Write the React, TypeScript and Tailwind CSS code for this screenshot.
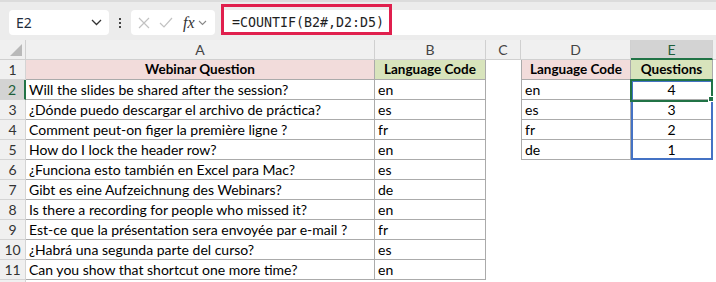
import React from "react";

const rows: [string, string][] = [
  ["Will the slides be shared after the session?", "en"],
  ["¿Dónde puedo descargar el archivo de práctica?", "es"],
  ["Comment peut-on figer la première ligne ?", "fr"],
  ["How do I lock the header row?", "en"],
  ["¿Funciona esto también en Excel para Mac?", "es"],
  ["Gibt es eine Aufzeichnung des Webinars?", "de"],
  ["Is there a recording for people who missed it?", "en"],
  ["Est-ce que la présentation sera envoyée par e-mail ?", "fr"],
  ["¿Habrá una segunda parte del curso?", "es"],
  ["Can you show that shortcut one more time?", "en"],
];

const summary: [string, string][] = [
  ["en", "4"],
  ["es", "3"],
  ["fr", "2"],
  ["de", "1"],
];

function FormulaBar() {
  return (
    <div className="relative h-[40px] bg-[#ececec] border-t-[2px] border-[#dcdcdc] flex items-center pl-[9px]">
      <div className="w-[100px] h-[25px] rounded-[4px] bg-white flex items-center justify-between pl-[7px] pr-[7px] mt-[3px]">
        <span className="font-['Noto_Sans',sans-serif] text-[14px] text-[#1f2d3d] leading-none">E2</span>
        <svg width="11" height="7" viewBox="0 0 11 7" fill="none">
          <path d="M1 1l4.5 4.5L10 1" stroke="#333" strokeWidth="1.3" />
        </svg>
      </div>
      <div className="w-[22px] h-[25px] mt-[3px] flex flex-col items-center justify-center gap-[2px]">
        <div className="w-[2px] h-[2px] bg-[#444]" />
        <div className="w-[2px] h-[2px] bg-[#444]" />
        <div className="w-[2px] h-[2px] bg-[#444]" />
      </div>
      <div className="w-[84px] h-[25px] mt-[3px] rounded-[4px] bg-white flex items-center pl-[7px]">
        <svg width="12" height="12" viewBox="0 0 12 12" fill="none">
          <path d="M1 1l10 10M11 1L1 11" stroke="#c2c2c2" strokeWidth="1.2" />
        </svg>
        <svg width="14" height="11" viewBox="0 0 14 11" fill="none" className="ml-[9px]">
          <path d="M1 6l4 4L13 1" stroke="#c2c2c2" strokeWidth="1.2" />
        </svg>
        <span className="ml-[10px] font-['Liberation_Serif',serif] italic text-[16px] text-[#333] leading-none">
          fx
        </span>
        <svg width="9" height="6" viewBox="0 0 9 6" fill="none" className="ml-[3px]">
          <path d="M1 1l3.5 3.5L8 1" stroke="#888" strokeWidth="1.1" />
        </svg>
      </div>
      <div className="flex-1 h-[25px] mt-[3px] ml-[6px] bg-white rounded-l-[4px] flex items-center pl-[11px]">
        <span className="font-['DejaVu_Sans_Mono',monospace] text-[13.3px] text-[#1f1f1f] leading-none">
          =COUNTIF(B2#,D2:D5)
        </span>
      </div>
      <div className="absolute left-[221px] top-[2px] w-[171px] h-[31px] border-[3px] border-[#e01f4d]" />
    </div>
  );
}

function Grid() {
  const hdr =
    "h-[20px] bg-[#f0f0f0] border-r border-b border-[#d0d0d0] flex items-center justify-center text-[14px] text-[#444]";
  const cell = "h-[20px] flex items-center pl-[3px] text-[14px] text-black whitespace-nowrap overflow-hidden";
  const rowHdr =
    "h-[20px] bg-[#f0f0f0] border-r border-b border-[#d4d4d4] flex items-center justify-center text-[14px] text-[#333]";
  const bold = "text-[13.5px] font-bold text-black";

  return (
    <div className="relative grid grid-cols-[26px_349px_111px_35px_110px_82px_3px] font-['Lato',sans-serif]">
      {/* column headers */}
      <div className="h-[20px] bg-[#f0f0f0] border-r border-b border-[#d0d0d0] relative">
        <svg width="12" height="12" viewBox="0 0 12 12" className="absolute right-[3px] bottom-[3px]">
          <path d="M12 0L12 12L0 12Z" fill="#b9b9b9" />
        </svg>
      </div>
      <div className={hdr}>A</div>
      <div className={hdr}>B</div>
      <div className={hdr}>C</div>
      <div className={hdr}>D</div>
      <div className="h-[20px] bg-[#d3d3d3] border-r border-[#d0d0d0] border-b-[2px] border-b-[#217346] flex items-center justify-center text-[14px] text-[#1d5e3a]">
        E
      </div>
      <div className="h-[20px] bg-[#f0f0f0] border-b border-[#d0d0d0]" />

      {/* row 1 */}
      <div className={rowHdr}>1</div>
      <div className={`h-[20px] bg-[#f2dcdb] border-r border-b border-[#ababab] flex items-center justify-center ${bold}`}>
        Webinar Question
      </div>
      <div className={`h-[20px] bg-[#d8e4bc] border-r border-b border-[#ababab] flex items-center justify-center ${bold}`}>
        Language Code
      </div>
      <div className="h-[20px]" />
      <div className={`h-[20px] bg-[#f2dcdb] border-l border-r border-b border-[#ababab] flex items-center justify-center ${bold}`}>
        Language Code
      </div>
      <div className={`h-[20px] bg-[#d8e4bc] border-r border-b border-[#ababab] flex items-center justify-center ${bold}`}>
        Questions
      </div>
      <div className="h-[20px]" />

      {rows.map(([q, code], i) => {
        const r = i + 2;
        const s = summary[i];
        return (
          <React.Fragment key={r}>
            {r === 2 ? (
              <div className="h-[20px] bg-[#d3d3d3] border-b border-[#d4d4d4] border-r-[2px] border-r-[#217346] flex items-center justify-center text-[14px] text-[#1d5e3a]">
                2
              </div>
            ) : (
              <div className={rowHdr}>{r}</div>
            )}
            <div className={`${cell} border-r border-b border-[#ababab]`}>{q}</div>
            <div className={`${cell} border-r border-b border-[#ababab]`}>{code}</div>
            <div className="h-[20px]" />
            {s ? (
              <>
                <div className={`${cell} border-l border-r border-b border-[#ababab]`}>{s[0]}</div>
                <div className="h-[20px] border-r border-b border-[#ababab] flex items-center justify-center text-[14px] text-black">
                  {s[1]}
                </div>
              </>
            ) : (
              <>
                <div className="h-[20px]" />
                <div className="h-[20px]" />
              </>
            )}
            <div className="h-[20px]" />
          </React.Fragment>
        );
      })}
      {/* row 12 partial */}
      <div className="h-[20px] bg-[#f0f0f0] border-r border-[#d4d4d4]" />
      <div className="h-[20px]" />
      <div className="h-[20px]" />
      <div className="h-[20px]" />
      <div className="h-[20px]" />
      <div className="h-[20px]" />
      <div className="h-[20px]" />

      {/* spill range outline */}
      <div className="absolute left-[631px] top-[40px] w-[82px] h-[80px] border-[2px] border-[#4472c4] pointer-events-none" />
      {/* active cell */}
      <div className="absolute left-[630px] top-[39px] w-[83px] h-[23px] border-[2px] border-[#217346] pointer-events-none" />
      <div className="absolute left-[708px] top-[56px] w-[6px] h-[6px] bg-[#217346] border border-white pointer-events-none" />
    </div>
  );
}

export default function App() {
  return (
    <div className="w-[716px] h-[282px] overflow-hidden bg-white">
      <FormulaBar />
      <Grid />
    </div>
  );
}
